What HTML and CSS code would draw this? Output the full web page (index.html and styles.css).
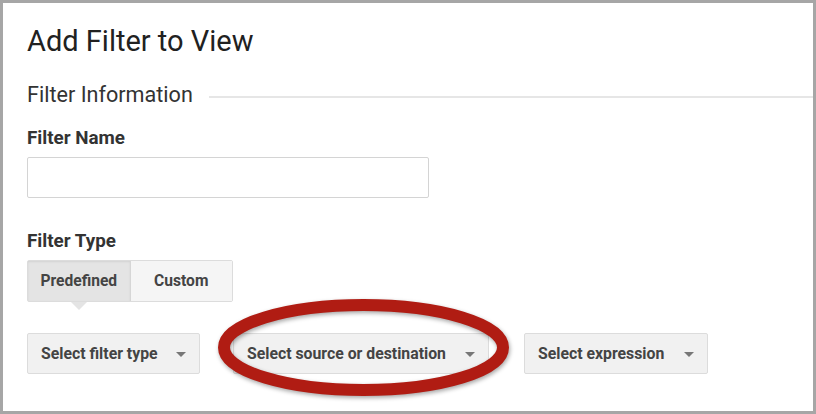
FILE: index.html
```html
<!DOCTYPE html>
<html lang="en">
<head>
    <meta charset="UTF-8">
    <meta name="viewport" content="width=device-width, initial-scale=1.0">
    <title>Add Filter to View</title>
    <link rel="stylesheet" href="styles.css">
</head>
<body>
    <div id="frame">
        <h1 class="title">Add Filter to View</h1>
        <div class="section-head">Filter Information</div>

        <label class="field-label">Filter Name</label>
        <input class="text-input" type="text">

        <label class="field-label type-label">Filter Type</label>
        <div class="toggle">
            <div class="seg active">Predefined</div>
            <div class="seg">Custom</div>
        </div>

        <div class="selects">
            <div class="select w1">Select filter type <span class="caret"></span></div>
            <div class="select w2">Select source or destination <span class="caret"></span></div>
            <div class="select w3">Select expression <span class="caret"></span></div>
        </div>

        <!-- red marker ring drawn over the second select -->
        <svg class="ring" width="816" height="414" viewBox="0 0 816 414">
            <ellipse cx="363.5" cy="347.5" rx="139.5" ry="42.5" fill="none" stroke="#b01c13" stroke-width="12"/>
        </svg>
    </div>
</body>
</html>
```

FILE: styles.css
```css
* {
    margin: 0;
    padding: 0;
    box-sizing: border-box;
}
body {
    width: 816px;
    height: 414px;
    font-family: Roboto, "Liberation Sans", sans-serif;
    background: #fff;
}

#frame {
    position: relative;
    width: 816px;
    height: 414px;
    border: 3px solid #a6a6a6;
    padding: 22px 0 0 24px;
    overflow: hidden;
}

.title {
    font-size: 29px;
    line-height: 32px;
    font-weight: 400;
    color: #212121;
}

.section-head {
    display: flex;
    align-items: center;
    margin-top: 25px;
    font-size: 21.6px;
    line-height: 26px;
    color: #333;
}
.section-head::after {
    content: "";
    flex: 1;
    height: 2px;
    margin: 4px 0 0 16px;
    background: #e6e6e6;
}

.field-label {
    display: block;
    margin-top: 19px;
    font-size: 18.8px;
    line-height: 22px;
    font-weight: 700;
    color: #333;
}
.type-label {
    margin-top: 32px;
}

.text-input {
    display: block;
    margin-top: 8px;
    width: 402px;
    height: 41px;
    border: 1px solid #d4d4d4;
    border-radius: 2px;
    background: #fff;
}

.toggle {
    display: flex;
    margin-top: 8px;
    width: 206px;
    height: 42px;
    border: 1px solid #dcdcdc;
    border-radius: 2px;
}
.seg {
    position: relative;
    flex: 1;
    display: flex;
    align-items: center;
    justify-content: center;
    font-size: 15.6px;
    font-weight: 700;
    color: #444;
    background: #f5f5f5;
}
.seg.active {
    background: #e4e4e4;
    border-right: 1px solid #d6d6d6;
    box-shadow: inset 0 1px 2px rgba(0,0,0,0.08);
}
.seg.active::after {
    content: "";
    position: absolute;
    left: 50%;
    top: 100%;
    margin-left: -8px;
    margin-top: 1px;
    border-left: 8px solid transparent;
    border-right: 8px solid transparent;
    border-top: 8px solid #e4e4e4;
}

.selects {
    display: flex;
    margin-top: 31px;
}
.select {
    display: flex;
    align-items: center;
    justify-content: space-between;
    height: 41px;
    padding: 0 13px 1px;
    background: #f1f1f1;
    border: 1px solid #dcdcdc;
    border-radius: 2px;
    font-size: 15.8px;
    font-weight: 700;
    color: #444;
}
.w1 { width: 173px; }
.w2 { width: 256px; margin-left: 33px; }
.w3 { width: 184px; margin-left: 35px; }

.caret {
    width: 0;
    height: 0;
    border-left: 5px solid transparent;
    border-right: 5px solid transparent;
    border-top: 5px solid #777;
    margin-top: 2px;
}

.ring {
    position: absolute;
    left: -3px;
    top: -3px;
    filter: drop-shadow(1px 2px 2px rgba(0,0,0,0.35));
}
```
